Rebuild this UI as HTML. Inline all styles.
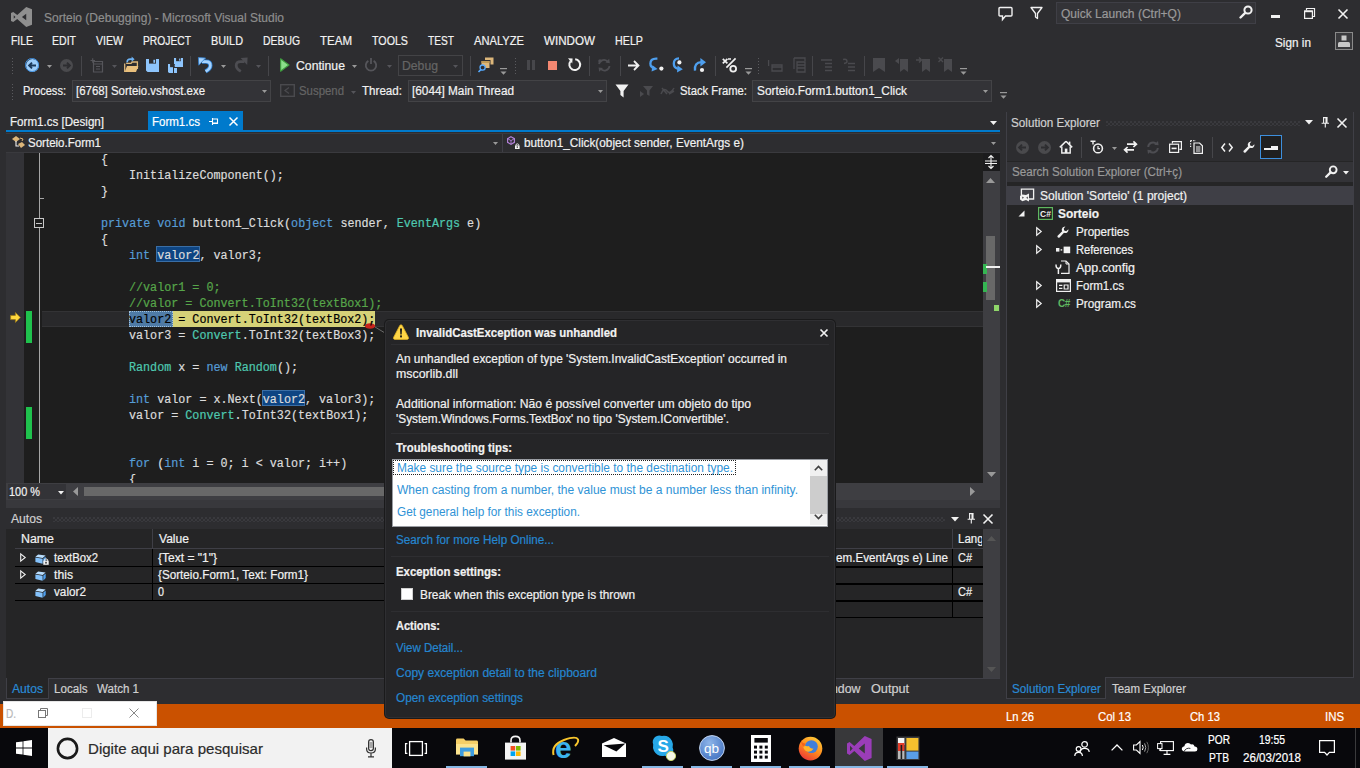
<!DOCTYPE html>
<html><head><meta charset="utf-8"><title>Sorteio (Debugging) - Microsoft Visual Studio</title>
<style>
*{box-sizing:border-box;margin:0;padding:0}
html,body{width:1360px;height:768px;overflow:hidden;background:#2d2d30;font-family:"Liberation Sans",sans-serif;font-size:12px;color:#f1f1f1}
.a{position:absolute;white-space:nowrap}
.t{position:absolute;white-space:pre;line-height:16px;height:16px;-webkit-text-stroke:0.2px currentColor}
.m{font-family:"Liberation Mono",monospace}
svg{position:absolute;overflow:visible}
.k{color:#569cd6}.c{color:#57a64a}.ty{color:#4ec9b0}
</style></head><body>
<svg style="left:11px;top:7px;" width="21" height="20" viewBox="0 0 21.5 22" preserveAspectRatio="none"><path d="M15.6 0 L21.5 2.6 V19.4 L15.6 22 L6.4 13.2 L2.3 16.6 L0 15.5 V6.5 L2.3 5.4 L6.4 8.8 Z M15.6 7.4 L11.2 11 L15.6 14.6 Z M2.8 9.2 V12.8 L4.6 11 Z" fill="#8f8f8f" fill-rule="evenodd"/></svg>
<div class="t" style="left:44px;top:10px;color:#8e8e8e;font-size:12.5px;transform:scaleX(0.9604);transform-origin:0 0;">Sorteio (Debugging) - Microsoft Visual Studio</div>
<svg style="left:998px;top:6px;" width="15" height="15" viewBox="0 0 15 15" preserveAspectRatio="none"><path d="M2 1.5 H13 Q14 1.5 14 2.5 V9 Q14 10 13 10 H7.5 L4.5 13.5 V10 H2 Q1 10 1 9 V2.5 Q1 1.5 2 1.5 Z" fill="none" stroke="#f1f1f1" stroke-width="1.4"/></svg>
<svg style="left:1030px;top:6px;" width="13" height="14" viewBox="0 0 13 14" preserveAspectRatio="none"><path d="M1 1.5 H12 L7.5 7.5 V12.5 L5.5 11 V7.5 Z" fill="none" stroke="#f1f1f1" stroke-width="1.3" stroke-linejoin="round"/></svg>
<div class="a" style="left:1056px;top:2px;width:200px;height:22px;background:#333337;border:1px solid #3f3f46"></div>
<div class="t" style="left:1061px;top:6px;color:#999999;font-size:12px;transform:scaleX(1.0023);transform-origin:0 0;">Quick Launch (Ctrl+Q)</div>
<svg style="left:1239px;top:5px;" width="14" height="14" viewBox="0 0 14 14" preserveAspectRatio="none"><circle cx="9" cy="5" r="3.6" fill="none" stroke="#f1f1f1" stroke-width="2"/><path d="M6.2 7.8 L1.5 12.5" stroke="#f1f1f1" stroke-width="2.4" stroke-linecap="round"/></svg>
<div class="a" style="left:1270.5px;top:15px;width:9.5px;height:3px;background:#f1f1f1;"></div>
<svg style="left:1304px;top:8px;" width="11" height="11" viewBox="0 0 11 11" preserveAspectRatio="none"><path d="M2.5 2.5 V0.5 H10.5 V8.5 H8.5" fill="none" stroke="#f1f1f1" stroke-width="1.2"/><rect x="0.6" y="3" width="7.8" height="7.4" fill="none" stroke="#f1f1f1" stroke-width="1.2"/><rect x="0.6" y="2.6" width="7.8" height="1.6" fill="#f1f1f1"/></svg>
<svg style="left:1338px;top:9px;" width="10" height="10" viewBox="0 0 10 10" preserveAspectRatio="none"><path d="M0.5 0.5 L9.5 9.5 M9.5 0.5 L0.5 9.5" stroke="#f1f1f1" stroke-width="1.6"/></svg>
<div class="t" style="left:1275px;top:34.5px;color:#f1f1f1;font-size:12px;transform:scaleX(0.9808);transform-origin:0 0;">Sign in</div>
<svg style="left:1334.5px;top:32.3px;" width="18" height="18" viewBox="0 0 18 18" preserveAspectRatio="none"><rect x="0.5" y="0.5" width="17" height="17" fill="#3a3a3d" stroke="#8a8a8a" stroke-width="1"/><rect x="6.5" y="3.5" width="5" height="5" fill="#c8c8c8"/><path d="M3 15 V11.5 Q3 10 4.5 10 H13.5 Q15 10 15 11.5 V15 Z" fill="#c8c8c8"/></svg>
<div class="t" style="left:11px;top:33px;color:#f1f1f1;font-size:12px;transform:scaleX(0.8681);transform-origin:0 0;">FILE</div>
<div class="t" style="left:52px;top:33px;color:#f1f1f1;font-size:12px;transform:scaleX(0.8777);transform-origin:0 0;">EDIT</div>
<div class="t" style="left:96px;top:33px;color:#f1f1f1;font-size:12px;transform:scaleX(0.8803);transform-origin:0 0;">VIEW</div>
<div class="t" style="left:143px;top:33px;color:#f1f1f1;font-size:12px;transform:scaleX(0.8569);transform-origin:0 0;">PROJECT</div>
<div class="t" style="left:211px;top:33px;color:#f1f1f1;font-size:12px;transform:scaleX(0.9054);transform-origin:0 0;">BUILD</div>
<div class="t" style="left:263px;top:33px;color:#f1f1f1;font-size:12px;transform:scaleX(0.8668);transform-origin:0 0;">DEBUG</div>
<div class="t" style="left:320px;top:33px;color:#f1f1f1;font-size:12px;transform:scaleX(0.9597);transform-origin:0 0;">TEAM</div>
<div class="t" style="left:372px;top:33px;color:#f1f1f1;font-size:12px;transform:scaleX(0.8896);transform-origin:0 0;">TOOLS</div>
<div class="t" style="left:428px;top:33px;color:#f1f1f1;font-size:12px;transform:scaleX(0.8477);transform-origin:0 0;">TEST</div>
<div class="t" style="left:474px;top:33px;color:#f1f1f1;font-size:12px;transform:scaleX(0.9294);transform-origin:0 0;">ANALYZE</div>
<div class="t" style="left:544px;top:33px;color:#f1f1f1;font-size:12px;transform:scaleX(0.9685);transform-origin:0 0;">WINDOW</div>
<div class="t" style="left:615px;top:33px;color:#f1f1f1;font-size:12px;transform:scaleX(0.8929);transform-origin:0 0;">HELP</div>
<div class="a" style="left:11px;top:57px;width:3px;height:18px;background-image:radial-gradient(circle,#5a5a5e 0.7px,transparent 0.9px);background-size:3px 3px"></div>
<svg style="left:25.5px;top:58.5px;" width="13" height="13" viewBox="0 0 13 13" preserveAspectRatio="none"><circle cx="6.5" cy="6.5" r="6.5" fill="#9ccdfb"/><path d="M3.2 6.5 H10 M6 3.6 L3.1 6.5 L6 9.4" fill="none" stroke="#1b3a5c" stroke-width="1.9"/></svg>
<div class="a" style="left:25.3px;top:58.3px;width:13.4px;height:13.4px;border-radius:50%;border:1.3px solid #3d8fe0"></div>
<svg style="left:46.5px;top:64.5px" width="5" height="3.0"><polygon points="0,0 5,0 2.5,3.0" fill="#999"/></svg>
<svg style="left:59.5px;top:58.5px;" width="13" height="13" viewBox="0 0 13 13" preserveAspectRatio="none"><circle cx="6.5" cy="6.5" r="6.5" fill="#4a4a4d"/><path d="M9.8 6.5 H3 M7 3.6 L9.9 6.5 L7 9.4" fill="none" stroke="#2d2d30" stroke-width="1.9"/></svg>
<div class="a" style="left:81px;top:56px;width:1px;height:20px;background:#46464a;"></div>
<svg style="left:90px;top:58px;" width="14" height="15" viewBox="0 0 14 15" preserveAspectRatio="none"><path d="M3.5 3.5 H12.5 V14 H3.5 Z M3.5 6 H12.5" fill="none" stroke="#55555a" stroke-width="1.2"/><path d="M0.5 2.5 H5 M2.7 0.3 V4.7 M6 8.5 H10 M6 11 H10" stroke="#55555a" stroke-width="1.1"/></svg>
<svg style="left:111.5px;top:64.5px" width="5" height="3.0"><polygon points="0,0 5,0 2.5,3.0" fill="#55555a"/></svg>
<svg style="left:124px;top:57px;" width="15" height="16" viewBox="0 0 15 16" preserveAspectRatio="none"><path d="M2.2 6.4 H7 L8.2 5 H13.4 V12" fill="none" stroke="#dcb67a" stroke-width="1.3"/><path d="M0.6 15 L3 9 H14.4 L12 15 Z" fill="#e8bf7c"/><path d="M0.7 15 V6.4" stroke="#dcb67a" stroke-width="1.3"/><path d="M3.2 5.4 Q3 2 6.6 2.2 H8.6" fill="none" stroke="#6db3f5" stroke-width="1.7"/><path d="M7.6 -0.4 L10.6 2.2 L7.6 4.8 Z" fill="#6db3f5"/></svg>
<svg style="left:146px;top:59px;" width="13" height="13" viewBox="0 0 13 13" preserveAspectRatio="none"><path d="M0 0 H13 V13 H1.6 L0 11.4 Z" fill="#8ec5fc"/><rect x="3" y="0" width="7" height="4.6" fill="#2d2d30"/><rect x="7.4" y="0.8" width="1.7" height="3" fill="#8ec5fc"/><rect x="3" y="8" width="7" height="5" fill="#2d2d30" opacity="0"/></svg>
<svg style="left:174px;top:58px;" width="9" height="9" viewBox="0 0 13 13" preserveAspectRatio="none"><path d="M0 0 H13 V13 H1.6 L0 11.4 Z" fill="#8ec5fc"/><rect x="3" y="0" width="7" height="4.6" fill="#2d2d30"/><rect x="7.4" y="0.8" width="1.7" height="3" fill="#8ec5fc"/><rect x="3" y="8" width="7" height="5" fill="#2d2d30" opacity="0"/></svg>
<svg style="left:168px;top:64px;" width="9" height="9" viewBox="0 0 13 13" preserveAspectRatio="none"><path d="M0 0 H13 V13 H1.6 L0 11.4 Z" fill="#8ec5fc"/><rect x="3" y="0" width="7" height="4.6" fill="#2d2d30"/><rect x="7.4" y="0.8" width="1.7" height="3" fill="#8ec5fc"/><rect x="3" y="8" width="7" height="5" fill="#2d2d30" opacity="0"/></svg>
<div class="a" style="left:173.2px;top:63.2px;width:1px;height:9.8px;background:#2d2d30;"></div>
<div class="a" style="left:173.2px;top:67.2px;width:9.8px;height:1px;background:#2d2d30;"></div>
<div class="a" style="left:190px;top:56px;width:1px;height:20px;background:#46464a;"></div>
<svg style="left:198px;top:56.5px;" width="15" height="16" viewBox="0 0 15 16" preserveAspectRatio="none"><path d="M4 4.6 H8 Q12.4 4.6 12.4 8.4 Q12.4 11.6 7.6 14.4" fill="none" stroke="#2f7fd0" stroke-width="4.2"/><path d="M4 4.6 H8 Q12.4 4.6 12.4 8.4 Q12.4 11.6 7.6 14.4" fill="none" stroke="#a5d2fd" stroke-width="2.6"/><path d="M0.4 0.6 L7.6 1 L0.8 8.2 Z" fill="#a5d2fd" stroke="#2f7fd0" stroke-width="0.8"/></svg>
<svg style="left:220.5px;top:64.5px" width="5" height="3.0"><polygon points="0,0 5,0 2.5,3.0" fill="#999"/></svg>
<svg style="left:234px;top:57px;" width="14" height="16" viewBox="0 0 14 16" preserveAspectRatio="none"><path d="M10.4 4.6 H6.5 Q2.2 4.6 2.2 8.4 Q2.2 11.6 6.8 14.4" fill="none" stroke="#4d4d52" stroke-width="2.8"/><path d="M13.6 0.6 L6.6 1 L13.2 8 Z" fill="#4d4d52"/></svg>
<svg style="left:255.5px;top:64.5px" width="5" height="3.0"><polygon points="0,0 5,0 2.5,3.0" fill="#55555a"/></svg>
<div class="a" style="left:268px;top:56px;width:1px;height:20px;background:#46464a;"></div>
<svg style="left:279.5px;top:57.5px;" width="9.5" height="14" viewBox="0 0 9.5 14" preserveAspectRatio="none"><path d="M0.6 0.8 L9 7 L0.6 13.2 Z" fill="#8be08b" stroke="#3f9b3f" stroke-width="1.2" stroke-linejoin="round"/></svg>
<div class="t" style="left:296px;top:57.5px;color:#f1f1f1;font-size:12px;transform:scaleX(1.0198);transform-origin:0 0;">Continue</div>
<svg style="left:351.5px;top:64.5px" width="5" height="3.0"><polygon points="0,0 5,0 2.5,3.0" fill="#999"/></svg>
<svg style="left:364px;top:58px;" width="14" height="14" viewBox="0 0 14 14" preserveAspectRatio="none"><path d="M9.6 2.9 A5.2 5.2 0 1 1 4.4 2.9" fill="none" stroke="#55555a" stroke-width="1.8"/><path d="M7 0 V6" stroke="#55555a" stroke-width="1.8"/></svg>
<svg style="left:386.5px;top:64.5px" width="5" height="3.0"><polygon points="0,0 5,0 2.5,3.0" fill="#55555a"/></svg>
<div class="a" style="left:398px;top:54.5px;width:65px;height:21px;background:#2d2d30;border:1px solid #434346"></div>
<div class="t" style="left:402px;top:57.5px;color:#656565;font-size:12px;transform:scaleX(1.0177);transform-origin:0 0;">Debug</div>
<svg style="left:452.5px;top:64.5px" width="5" height="3.0"><polygon points="0,0 5,0 2.5,3.0" fill="#55555a"/></svg>
<div class="a" style="left:470px;top:56px;width:1px;height:20px;background:#46464a;"></div>
<svg style="left:478px;top:57px;" width="16" height="16" viewBox="0 0 16 16" preserveAspectRatio="none"><rect x="7" y="0.5" width="8.5" height="7" fill="#dcb67a"/><rect x="3" y="3.5" width="9" height="8" fill="#dcb67a" stroke="#2d2d30" stroke-width="1"/><rect x="3.5" y="4" width="8" height="2" fill="#c09a55"/><circle cx="4.6" cy="10.6" r="2.6" fill="#2d2d30" stroke="#55aaff" stroke-width="1.3"/><path d="M2.8 12.6 L0.5 15" stroke="#55aaff" stroke-width="1.6"/></svg>
<svg style="left:500px;top:68px;" width="7" height="8" viewBox="0 0 7 8" preserveAspectRatio="none"><rect x="0" y="0" width="7" height="1.2" fill="#999"/><polygon points="0.5,3.4 6.5,3.4 3.5,6.8" fill="#999"/></svg>
<div class="a" style="left:514px;top:57px;width:3px;height:18px;background-image:radial-gradient(circle,#5a5a5e 0.7px,transparent 0.9px);background-size:3px 3px"></div>
<div class="a" style="left:526.5px;top:60px;width:3px;height:10px;background:#47474b;"></div>
<div class="a" style="left:531.5px;top:60px;width:3px;height:10px;background:#47474b;"></div>
<div class="a" style="left:548px;top:60.5px;width:9px;height:9px;background:#f48771;"></div>
<svg style="left:567px;top:57px;" width="15" height="15" viewBox="0 0 15 15" preserveAspectRatio="none"><path d="M3.6 4.2 A5.4 5.4 0 1 0 8.2 2.3" fill="none" stroke="#f1f1f1" stroke-width="2"/><path d="M1 1.2 L5.6 1.6 L5.2 6.4 Z" fill="#f1f1f1"/></svg>
<div class="a" style="left:589px;top:56px;width:1px;height:20px;background:#46464a;"></div>
<svg style="left:597px;top:58px;" width="15" height="14" viewBox="0 0 15 14" preserveAspectRatio="none"><path d="M2 6 A5 5 0 0 1 11 4 M12.5 8 A5 5 0 0 1 3.5 10.5" fill="none" stroke="#4d4d52" stroke-width="1.8"/><path d="M8.4 4.6 L12.8 5.2 L12.2 0.8 Z M6 10 L1.6 9.4 L2.2 13.8 Z" fill="#4d4d52"/><circle cx="3" cy="3" r="1.8" fill="#4d4d52"/></svg>
<div class="a" style="left:620px;top:56px;width:1px;height:20px;background:#46464a;"></div>
<svg style="left:628px;top:60px;" width="12" height="11" viewBox="0 0 12 11" preserveAspectRatio="none"><path d="M0 5.5 H10 M6 1 L10.5 5.5 L6 10" fill="none" stroke="#f1f1f1" stroke-width="1.8"/></svg>
<svg style="left:648px;top:57px;" width="16" height="16" viewBox="0 0 16 16" preserveAspectRatio="none"><path d="M9.4 1.6 H8 Q2.4 1.6 2.4 6.6 Q2.4 10.4 6 11" fill="none" stroke="#4e9fee" stroke-width="2.3"/><path d="M4.4 8.2 L9.6 12 L3.6 14.4 Z" fill="#4e9fee"/><circle cx="13.4" cy="11.6" r="2.1" fill="#f1f1f1"/></svg>
<svg style="left:672px;top:57px;" width="13" height="17" viewBox="0 0 13 17" preserveAspectRatio="none"><path d="M7 1.4 Q1.8 1.4 1.8 6.6 Q1.8 11 6 11.8" fill="none" stroke="#4e9fee" stroke-width="2.3"/><path d="M5.6 8.4 L10.8 12.2 L5 15.4 Z" fill="#4e9fee"/><circle cx="7.4" cy="5.4" r="2.1" fill="#f1f1f1"/></svg>
<svg style="left:693px;top:57px;" width="14" height="16" viewBox="0 0 14 16" preserveAspectRatio="none"><path d="M2 13.6 Q1 5.6 8.4 5.2" fill="none" stroke="#4e9fee" stroke-width="2.3"/><path d="M7.4 1 L13 5.2 L7.4 9.4 Z" fill="#4e9fee"/><circle cx="9" cy="13" r="2.1" fill="#f1f1f1"/></svg>
<div class="a" style="left:715px;top:56px;width:1px;height:20px;background:#46464a;"></div>
<svg style="left:722px;top:57px;" width="16" height="16" viewBox="0 0 16 16" preserveAspectRatio="none"><path d="M0.8 1.8 L5.4 6.4 M0.8 6.4 L5.4 1.8 M6 2 H9 M13.6 1.4 L4.4 10.6" fill="none" stroke="#f1f1f1" stroke-width="1.7"/><circle cx="11.2" cy="11.8" r="2.9" fill="none" stroke="#f1f1f1" stroke-width="1.8"/></svg>
<svg style="left:745px;top:68px;" width="7" height="8" viewBox="0 0 7 8" preserveAspectRatio="none"><rect x="0" y="0" width="7" height="1.2" fill="#999"/><polygon points="0.5,3.4 6.5,3.4 3.5,6.8" fill="#999"/></svg>
<div class="a" style="left:757px;top:57px;width:3px;height:18px;background-image:radial-gradient(circle,#5a5a5e 0.7px,transparent 0.9px);background-size:3px 3px"></div>
<svg style="left:768px;top:58px;" width="15" height="14" viewBox="0 0 15 14" preserveAspectRatio="none"><path d="M0.6 2 V8 M4 7 H14 V13 H4 Z M4 9 H14" fill="none" stroke="#4a4a4e" stroke-width="1.3"/></svg>
<svg style="left:790px;top:57px;" width="16" height="16" viewBox="0 0 16 16" preserveAspectRatio="none"><path d="M4 1 H15 V4 M4 1 V12 M7 5 H15 V15 H7 Z M7 8 H15 M7 11 H15" fill="none" stroke="#4a4a4e" stroke-width="1.3"/></svg>
<div class="a" style="left:812px;top:56px;width:1px;height:20px;background:#46464a;"></div>
<svg style="left:820px;top:59px;" width="13" height="12" viewBox="0 0 13 12" preserveAspectRatio="none"><path d="M1 1 H12 M5 4.5 H12 M5 8 H12 M5 11.5 H12" stroke="#4a4a4e" stroke-width="1.4"/></svg>
<svg style="left:842px;top:58px;" width="14" height="13" viewBox="0 0 14 13" preserveAspectRatio="none"><path d="M1 1.5 Q5 0.5 5 3.5 Q5 5 2 5.5 M6 5.5 H13 M6 9 H13 M6 12.5 H13" fill="none" stroke="#4a4a4e" stroke-width="1.4"/></svg>
<div class="a" style="left:864px;top:56px;width:1px;height:20px;background:#46464a;"></div>
<svg style="left:873px;top:58px;" width="12" height="14" viewBox="0 0 12 14" preserveAspectRatio="none"><path d="M0 0 H12 V14 L6 10 L0 14 Z" fill="#4a4a4e"/></svg>
<svg style="left:895px;top:57px;" width="14" height="15" viewBox="0 0 14 15" preserveAspectRatio="none"><path d="M5 2 H13 V15 L9 12 L5 15 Z" fill="#4a4a4e"/><path d="M0 4 L4 1 V7 Z" fill="#4a4a4e"/></svg>
<svg style="left:916px;top:57px;" width="15" height="15" viewBox="0 0 15 15" preserveAspectRatio="none"><path d="M6 2 H14 V15 L10 12 L6 15 Z" fill="#4a4a4e"/><path d="M0 3 H5 M3 0.5 L5.5 3 L3 5.5" stroke="#4a4a4e" stroke-width="1.4" fill="none"/></svg>
<svg style="left:938px;top:57px;" width="15" height="15" viewBox="0 0 15 15" preserveAspectRatio="none"><path d="M6 2 H14 V15 L10 12 L6 15 Z" fill="#4a4a4e"/><path d="M0.5 0.5 L5 5 M5 0.5 L0.5 5" stroke="#4a4a4e" stroke-width="1.4"/></svg>
<svg style="left:960px;top:68px;" width="7" height="8" viewBox="0 0 7 8" preserveAspectRatio="none"><rect x="0" y="0" width="7" height="1.2" fill="#999"/><polygon points="0.5,3.4 6.5,3.4 3.5,6.8" fill="#999"/></svg>
<div class="a" style="left:11px;top:83px;width:3px;height:18px;background-image:radial-gradient(circle,#5a5a5e 0.7px,transparent 0.9px);background-size:3px 3px"></div>
<div class="t" style="left:23px;top:83.3px;color:#f1f1f1;font-size:12px;transform:scaleX(0.9210);transform-origin:0 0;">Process:</div>
<div class="a" style="left:72px;top:80px;width:199px;height:22px;background:#333337;border:1px solid #434346"></div>
<div class="t" style="left:76px;top:83.3px;color:#f1f1f1;font-size:12px;transform:scaleX(0.9526);transform-origin:0 0;">[6768] Sorteio.vshost.exe</div>
<svg style="left:261.5px;top:90.0px" width="5" height="3.0"><polygon points="0,0 5,0 2.5,3.0" fill="#999"/></svg>
<svg style="left:280px;top:84px;" width="15" height="13" viewBox="0 0 15 13" preserveAspectRatio="none"><rect x="0.7" y="0.7" width="13.6" height="11.6" fill="none" stroke="#4a4a4e" stroke-width="1.4"/><path d="M9 3.5 L5 6.5 L9 9.5" fill="none" stroke="#4a4a4e" stroke-width="1.3"/></svg>
<div class="t" style="left:299px;top:83.3px;color:#656565;font-size:12px;transform:scaleX(0.9499);transform-origin:0 0;">Suspend</div>
<svg style="left:350.5px;top:90.5px" width="5" height="3.0"><polygon points="0,0 5,0 2.5,3.0" fill="#55555a"/></svg>
<div class="t" style="left:362px;top:83.3px;color:#f1f1f1;font-size:12px;transform:scaleX(0.9671);transform-origin:0 0;">Thread:</div>
<div class="a" style="left:408px;top:80px;width:199px;height:22px;background:#333337;border:1px solid #434346"></div>
<div class="t" style="left:412px;top:83.3px;color:#f1f1f1;font-size:12px;transform:scaleX(0.9821);transform-origin:0 0;">[6044] Main Thread</div>
<svg style="left:597.5px;top:90.0px" width="5" height="3.0"><polygon points="0,0 5,0 2.5,3.0" fill="#999"/></svg>
<svg style="left:615px;top:84px;" width="14" height="14" viewBox="0 0 14 14" preserveAspectRatio="none"><path d="M0.5 0.5 H13.5 L8.6 7 V13.5 L5.4 11 V7 Z" fill="#f1f1f1"/></svg>
<svg style="left:640px;top:85px;" width="14" height="13" viewBox="0 0 14 13" preserveAspectRatio="none"><path d="M3 1 H13 L9.5 5.5 V11 L7 9.5 V5.5 Z" fill="#4a4a4e"/><path d="M0 6 L4 9 L0 12" fill="#4a4a4e"/></svg>
<svg style="left:661px;top:86px;" width="14" height="10" viewBox="0 0 14 10" preserveAspectRatio="none"><path d="M0 8 Q3 1 6 5 T13 2 M1 2 L6 8 M8 8 L13 5" fill="none" stroke="#4a4a4e" stroke-width="1.5"/></svg>
<div class="t" style="left:680px;top:83.3px;color:#f1f1f1;font-size:12px;transform:scaleX(0.9389);transform-origin:0 0;">Stack Frame:</div>
<div class="a" style="left:752px;top:80px;width:240px;height:22px;background:#333337;border:1px solid #434346"></div>
<div class="t" style="left:757px;top:83.3px;color:#f1f1f1;font-size:12px;transform:scaleX(0.9863);transform-origin:0 0;">Sorteio.Form1.button1_Click</div>
<svg style="left:982.5px;top:90.0px" width="5" height="3.0"><polygon points="0,0 5,0 2.5,3.0" fill="#999"/></svg>
<svg style="left:1000px;top:92px;" width="7" height="8" viewBox="0 0 7 8" preserveAspectRatio="none"><rect x="0" y="0" width="7" height="1.2" fill="#999"/><polygon points="0.5,3.4 6.5,3.4 3.5,6.8" fill="#999"/></svg>
<div class="t" style="left:10px;top:114.3px;color:#f1f1f1;font-size:12px;transform:scaleX(0.9655);transform-origin:0 0;">Form1.cs [Design]</div>
<div class="a" style="left:148px;top:111px;width:95px;height:20px;background:#007acc;"></div>
<div class="t" style="left:152px;top:114.3px;color:#ffffff;font-size:12px;transform:scaleX(0.9597);transform-origin:0 0;">Form1.cs</div>
<svg style="left:209px;top:117px;" width="10" height="9" viewBox="0 0 10 9" preserveAspectRatio="none"><path d="M0 4.5 H3.5 M3.5 1 V8 M3.5 2 H8.5 V6.5 H3.5 M3.5 6 H8.5" fill="none" stroke="#fff" stroke-width="1.1"/></svg>
<svg style="left:229px;top:117px;" width="9" height="9" viewBox="0 0 9 9" preserveAspectRatio="none"><path d="M0.5 0.5 L8.5 8.5 M8.5 0.5 L0.5 8.5" stroke="#fff" stroke-width="1.5"/></svg>
<div class="a" style="left:6px;top:130px;width:994px;height:2px;background:#007acc;"></div>
<svg style="left:990.0px;top:120.5px" width="7" height="4.0"><polygon points="0,0 7,0 3.5,4.0" fill="#f1f1f1"/></svg>
<div class="a" style="left:6px;top:133px;width:994px;height:20px;background:#2d2d30;border-top:1px solid #3a3a3e;border-bottom:1px solid #3a3a3e"></div>
<svg style="left:11px;top:135px;" width="15" height="15" viewBox="0 0 15 15" preserveAspectRatio="none"><path d="M1 4 L5 1 L9 4 L5 7 Z" fill="#dcb67a"/><path d="M7 9 L11 7 L14 10 L10 13 Z" fill="#dcb67a"/><path d="M5 6 V11 H8" fill="none" stroke="#f1f1f1" stroke-width="1.1"/><path d="M9 3 L12 4 L11 6" fill="none" stroke="#dcb67a" stroke-width="1"/></svg>
<div class="t" style="left:28px;top:135px;color:#f1f1f1;font-size:12px;transform:scaleX(0.9601);transform-origin:0 0;">Sorteio.Form1</div>
<svg style="left:492.5px;top:142.0px" width="5" height="3.0"><polygon points="0,0 5,0 2.5,3.0" fill="#999"/></svg>
<div class="a" style="left:502px;top:134px;width:1px;height:18px;background:#3f3f46;"></div>
<svg style="left:507px;top:136px;" width="13" height="14" viewBox="0 0 13 14" preserveAspectRatio="none"><path d="M4 0.8 L7.4 2.6 V6.4 L4 8.2 L0.6 6.4 V2.6 Z" fill="none" stroke="#b180d7" stroke-width="1.2"/><path d="M4 8.2 V4.6 L0.8 2.8 M4 4.6 L7.2 2.8" fill="none" stroke="#b180d7" stroke-width="0.9"/><rect x="8" y="9.4" width="4.6" height="3.6" fill="#f1f1f1"/><path d="M9 9.4 V8.4 Q10.3 7.2 11.6 8.4 V9.4" fill="none" stroke="#f1f1f1" stroke-width="0.9"/><rect x="9.7" y="10.4" width="1.2" height="1.4" fill="#2d2d30"/></svg>
<div class="t" style="left:524px;top:135px;color:#f1f1f1;font-size:12px;transform:scaleX(0.9816);transform-origin:0 0;">button1_Click(object sender, EventArgs e)</div>
<svg style="left:990.5px;top:142.0px" width="5" height="3.0"><polygon points="0,0 5,0 2.5,3.0" fill="#999"/></svg>
<div class="a" style="left:6px;top:153px;width:977px;height:330px;background:#1e1e1e;"></div>
<div class="a" style="left:6px;top:153px;width:18px;height:330px;background:#333337;"></div>
<div class="a" style="left:39px;top:153px;width:1px;height:330px;background:#a5a5a5;"></div>
<div class="a" style="left:39px;top:198px;width:5px;height:1px;background:#a5a5a5;"></div>
<div class="a" style="left:34px;top:218px;width:10px;height:10px;background:#1e1e1e;border:1px solid #c8c8c8"></div>
<div class="a" style="left:36px;top:222.5px;width:6px;height:1px;background:#c8c8c8;"></div>
<div class="a" style="left:42px;top:311px;width:941px;height:16px;background:#29292b;border-top:1px solid #333335;border-bottom:1px solid #333335"></div>
<div class="a" style="left:26px;top:311px;width:6px;height:32px;background:#1fc24d;"></div>
<div class="a" style="left:26px;top:407px;width:6px;height:32px;background:#1fc24d;"></div>
<svg style="left:10px;top:312px;" width="11" height="11" viewBox="0 0 11 11" preserveAspectRatio="none"><path d="M0.6 3.4 H5.4 V0.6 L10.4 5.5 L5.4 10.4 V7.6 H0.6 Z" fill="#ffd83d" stroke="#9c7a1a" stroke-width="0.8"/></svg>
<div class="a" style="left:156px;top:246.3px;width:44px;height:16.2px;background:#0e4583;border:1px solid #3a6ea5"></div>
<div class="a" style="left:261.5px;top:390.3px;width:43.5px;height:16.2px;background:#0e4583;border:1px solid #3a6ea5"></div>
<div class="a" style="left:128.5px;top:311.3px;width:246px;height:15.3px;background:#d6d278;"></div>
<div class="a" style="left:128.5px;top:311.3px;width:44px;height:15.3px;background:#4f7ba6;border:1px dotted #9fc0dd"></div>
<svg style="left:362px;top:322px;" width="30" height="14" viewBox="0 0 30 14" preserveAspectRatio="none"><ellipse cx="8" cy="4" rx="5.2" ry="2.8" fill="#c8231c"/><path d="M13 5 L23 11" stroke="#6a6a6a" stroke-width="1"/></svg>
<div class="t m" style="left:100.8px;top:151.8px;color:#dcdcdc;font-size:12px;transform:scaleX(0.9718);transform-origin:0 0;">{</div>
<div class="t m" style="left:129.0px;top:167.8px;color:#dcdcdc;font-size:12px;transform:scaleX(0.9777);transform-origin:0 0;">InitializeComponent();</div>
<div class="t m" style="left:100.8px;top:183.8px;color:#dcdcdc;font-size:12px;transform:scaleX(0.9718);transform-origin:0 0;">}</div>
<div class="t m" style="left:100.8px;top:215.8px;color:#dcdcdc;font-size:12px;transform:scaleX(0.9776);transform-origin:0 0;"><span style="color:#569cd6">private</span> <span style="color:#569cd6">void</span> button1_Click(<span style="color:#569cd6">object</span> sender, <span style="color:#4ec9b0">EventArgs</span> e)</div>
<div class="t m" style="left:100.8px;top:231.8px;color:#dcdcdc;font-size:12px;transform:scaleX(0.9718);transform-origin:0 0;">{</div>
<div class="t m" style="left:129.0px;top:247.8px;color:#dcdcdc;font-size:12px;transform:scaleX(0.9779);transform-origin:0 0;"><span style="color:#569cd6">int</span> valor2, valor3;</div>
<div class="t m" style="left:129.0px;top:279.8px;color:#dcdcdc;font-size:12px;transform:scaleX(0.9773);transform-origin:0 0;"><span style="color:#57a64a">//valor1 = 0;</span></div>
<div class="t m" style="left:129.0px;top:295.8px;color:#dcdcdc;font-size:12px;transform:scaleX(0.9774);transform-origin:0 0;"><span style="color:#57a64a">//valor = Convert.ToInt32(textBox1);</span></div>
<div class="t m" style="left:129.0px;top:311.8px;color:#dcdcdc;font-size:12px;transform:scaleX(0.9776);transform-origin:0 0;"><span style="color:#000000">valor2 = Convert.ToInt32(textBox2);</span></div>
<div class="t m" style="left:129.0px;top:327.8px;color:#dcdcdc;font-size:12px;transform:scaleX(0.9775);transform-origin:0 0;">valor3 = <span style="color:#4ec9b0">Convert</span>.ToInt32(textBox3);</div>
<div class="t m" style="left:129.0px;top:359.8px;color:#dcdcdc;font-size:12px;transform:scaleX(0.9776);transform-origin:0 0;"><span style="color:#4ec9b0">Random</span> x = <span style="color:#569cd6">new</span> <span style="color:#4ec9b0">Random</span>();</div>
<div class="t m" style="left:129.0px;top:391.8px;color:#dcdcdc;font-size:12px;transform:scaleX(0.9776);transform-origin:0 0;"><span style="color:#569cd6">int</span> valor = x.Next(valor2, valor3);</div>
<div class="t m" style="left:129.0px;top:407.8px;color:#dcdcdc;font-size:12px;transform:scaleX(0.9777);transform-origin:0 0;">valor = <span style="color:#4ec9b0">Convert</span>.ToInt32(textBox1);</div>
<div class="t m" style="left:129.0px;top:455.8px;color:#dcdcdc;font-size:12px;transform:scaleX(0.9773);transform-origin:0 0;"><span style="color:#569cd6">for</span> (<span style="color:#569cd6">int</span> i = 0; i &lt; valor; i++)</div>
<div class="t m" style="left:129.0px;top:471.8px;color:#dcdcdc;font-size:12px;transform:scaleX(0.9718);transform-origin:0 0;">{</div>
<div class="a" style="left:983px;top:153px;width:17px;height:330px;background:#3e3e42;"></div>
<div class="a" style="left:983px;top:153px;width:17px;height:17.5px;background:#1b1b1d;"></div>
<svg style="left:985px;top:155px;" width="12" height="14" viewBox="0 0 12 14" preserveAspectRatio="none"><path d="M0 6 H12 M0 8.5 H12" stroke="#f1f1f1" stroke-width="1.2"/><path d="M6 0.5 V13.5 M3.5 3 L6 0.5 L8.5 3 M3.5 11 L6 13.5 L8.5 11" stroke="#f1f1f1" stroke-width="1.1" fill="none"/></svg>
<svg style="left:986px;top:177.5px;" width="9" height="5" viewBox="0 0 9 5" preserveAspectRatio="none"><polygon points="0,5 9,5 4.5,0" fill="#999"/></svg>
<svg style="left:987px;top:472px;" width="9" height="5" viewBox="0 0 9 5" preserveAspectRatio="none"><polygon points="0,0 9,0 4.5,5" fill="#999"/></svg>
<div class="a" style="left:986px;top:236px;width:9px;height:64px;background:#686868;"></div>
<div class="a" style="left:982.5px;top:264px;width:4.7px;height:9.5px;background:#35b552;"></div>
<div class="a" style="left:982.5px;top:282px;width:4.7px;height:10px;background:#35b552;"></div>
<div class="a" style="left:986px;top:265.8px;width:14px;height:1.8px;background:#f1f1f1;"></div>
<div class="a" style="left:994.3px;top:305px;width:5px;height:6.4px;background:#8fd66a;"></div>
<div class="a" style="left:6px;top:483px;width:994px;height:17px;background:#3e3e42;"></div>
<div class="a" style="left:6px;top:500px;width:994px;height:8px;background:#38383c;"></div>
<div class="a" style="left:8px;top:484px;width:58px;height:14.5px;background:#333337;"></div>
<div class="t" style="left:9px;top:484.3px;color:#f1f1f1;font-size:12px;transform:scaleX(0.9109);transform-origin:0 0;">100 %</div>
<svg style="left:58.0px;top:490.75px" width="6" height="3.5"><polygon points="0,0 6,0 3.0,3.5" fill="#f1f1f1"/></svg>
<svg style="left:73px;top:487px;" width="5" height="9" viewBox="0 0 5 9" preserveAspectRatio="none"><polygon points="5,0 5,9 0,4.5" fill="#999"/></svg>
<svg style="left:970px;top:487px;" width="5" height="9" viewBox="0 0 5 9" preserveAspectRatio="none"><polygon points="0,0 0,9 5,4.5" fill="#999"/></svg>
<div class="a" style="left:84px;top:487.2px;width:740px;height:8.6px;background:#686868;"></div>
<div class="a" style="left:983px;top:483px;width:17px;height:17px;background:#3e3e42;"></div>
<div class="a" style="left:6px;top:508px;width:994px;height:170px;background:#252526;"></div>
<div class="a" style="left:6px;top:508px;width:994px;height:21px;background:#2d2d30;"></div>
<div class="t" style="left:11px;top:511px;color:#d0d0d0;font-size:12px;transform:scaleX(1.0102);transform-origin:0 0;">Autos</div>
<div class="a" style="left:52px;top:516px;width:893px;height:6px;background-image:radial-gradient(circle,#434347 0.6px,transparent 0.85px);background-size:4px 4px;background-position:0 0"></div><div class="a" style="left:54px;top:518px;width:891px;height:4px;background-image:radial-gradient(circle,#434347 0.6px,transparent 0.85px);background-size:4px 4px"></div>
<svg style="left:951.0px;top:516.75px" width="8" height="4.5"><polygon points="0,0 8,0 4.0,4.5" fill="#f1f1f1"/></svg>
<svg style="left:967px;top:513px;" width="8" height="11" viewBox="0 0 8 11" preserveAspectRatio="none"><path d="M2 0.6 H6.6 M2.6 0.6 V6 M6 0.6 V6 M5 0.6 V6 M0.6 6.2 H8 M4.3 6.2 V10.6" fill="none" stroke="#f1f1f1" stroke-width="1.1"/></svg>
<svg style="left:983px;top:514px;" width="10" height="10" viewBox="0 0 10 10" preserveAspectRatio="none"><path d="M0.5 0.5 L9.5 9.5 M9.5 0.5 L0.5 9.5" stroke="#f1f1f1" stroke-width="1.6"/></svg>
<div class="a" style="left:15px;top:529px;width:968px;height:19px;background:#252526;"></div>
<div class="a" style="left:15px;top:548px;width:968px;height:1px;background:#3f3f46;"></div>
<div class="a" style="left:152px;top:529px;width:1px;height:71px;background:#3f3f46;"></div>
<div class="t" style="left:21px;top:531px;color:#f1f1f1;font-size:12px;transform:scaleX(1.0307);transform-origin:0 0;">Name</div>
<div class="t" style="left:159px;top:531px;color:#f1f1f1;font-size:12px;transform:scaleX(1.0063);transform-origin:0 0;">Value</div>
<div class="a" style="left:15px;top:566px;width:968px;height:1px;background:#000;"></div>
<div class="a" style="left:15px;top:583px;width:968px;height:1px;background:#000;"></div>
<div class="a" style="left:15px;top:600px;width:968px;height:1px;background:#000;"></div>
<div class="a" style="left:152px;top:549px;width:1px;height:51px;background:#000;"></div>
<svg style="left:20px;top:553px;" width="6" height="9" viewBox="0 0 6 9" preserveAspectRatio="none"><path d="M0.7 0.8 L5.2 4.5 L0.7 8.2 Z" fill="none" stroke="#f1f1f1" stroke-width="1.1"/></svg>
<svg style="left:35px;top:553.5px;" width="11" height="10" viewBox="0 0 11 10" preserveAspectRatio="none"><path d="M3.2 0.4 L10.6 1.4 L7.6 4 L0.4 2.8 Z" fill="#b9defe"/><path d="M0.4 3.4 L7.6 4.8 V9.8 L0.4 8 Z" fill="#84c2fb"/><path d="M8.3 4.6 L10.7 2.4 V7 L8.3 9.6 Z" fill="#4e9fee"/></svg>
<svg style="left:43px;top:558px;" width="6" height="7" viewBox="0 0 6 7" preserveAspectRatio="none"><rect x="0.3" y="2.6" width="5.4" height="4.2" fill="#f1f1f1"/><path d="M1.4 2.8 V1.6 Q3 0 4.6 1.6 V2.8" fill="none" stroke="#f1f1f1" stroke-width="1"/><rect x="2.3" y="3.8" width="1.4" height="1.8" fill="#252526"/></svg>
<div class="t" style="left:54px;top:550px;color:#f1f1f1;font-size:12px;transform:scaleX(0.9421);transform-origin:0 0;">textBox2</div>
<div class="t" style="left:158px;top:550px;color:#f1f1f1;font-size:12px;transform:scaleX(1.0016);transform-origin:0 0;">{Text = "1"}</div>
<svg style="left:20px;top:570px;" width="6" height="9" viewBox="0 0 6 9" preserveAspectRatio="none"><path d="M0.7 0.8 L5.2 4.5 L0.7 8.2 Z" fill="none" stroke="#f1f1f1" stroke-width="1.1"/></svg>
<svg style="left:35px;top:570.5px;" width="11" height="10" viewBox="0 0 11 10" preserveAspectRatio="none"><path d="M3.2 0.4 L10.6 1.4 L7.6 4 L0.4 2.8 Z" fill="#b9defe"/><path d="M0.4 3.4 L7.6 4.8 V9.8 L0.4 8 Z" fill="#84c2fb"/><path d="M8.3 4.6 L10.7 2.4 V7 L8.3 9.6 Z" fill="#4e9fee"/></svg>
<div class="t" style="left:54px;top:567px;color:#f1f1f1;font-size:12px;transform:scaleX(1.0167);transform-origin:0 0;">this</div>
<div class="t" style="left:158px;top:567px;color:#f1f1f1;font-size:12px;transform:scaleX(0.9750);transform-origin:0 0;">{Sorteio.Form1, Text: Form1}</div>
<svg style="left:35px;top:587.5px;" width="11" height="10" viewBox="0 0 11 10" preserveAspectRatio="none"><path d="M3.2 0.4 L10.6 1.4 L7.6 4 L0.4 2.8 Z" fill="#b9defe"/><path d="M0.4 3.4 L7.6 4.8 V9.8 L0.4 8 Z" fill="#84c2fb"/><path d="M8.3 4.6 L10.7 2.4 V7 L8.3 9.6 Z" fill="#4e9fee"/></svg>
<div class="t" style="left:54px;top:584px;color:#f1f1f1;font-size:12px;transform:scaleX(0.9790);transform-origin:0 0;">valor2</div>
<div class="t" style="left:158px;top:584px;color:#f1f1f1;font-size:12px;transform:scaleX(0.8972);transform-origin:0 0;">0</div>
<div class="a" style="left:952px;top:529px;width:1px;height:20px;background:#3f3f46;"></div>
<div class="t" style="left:958px;top:531px;color:#f1f1f1;font-size:12px;transform:scaleX(0.9600);transform-origin:0 0;width:25px;overflow:hidden;">Lang</div>
<div class="a" style="left:835px;top:567px;width:148px;height:1px;background:#000;"></div>
<div class="a" style="left:835px;top:584px;width:148px;height:1px;background:#000;"></div>
<div class="a" style="left:835px;top:601px;width:148px;height:1px;background:#000;"></div>
<div class="a" style="left:835px;top:617px;width:148px;height:1px;background:#000;"></div>
<div class="a" style="left:952px;top:549px;width:1px;height:68px;background:#000;"></div>
<div class="t" style="left:836px;top:550px;color:#f1f1f1;font-size:12px;transform:scaleX(0.9706);transform-origin:0 0;">em.EventArgs e) Line</div>
<div class="t" style="left:958px;top:550px;color:#f1f1f1;font-size:12px;transform:scaleX(0.9124);transform-origin:0 0;">C#</div>
<div class="t" style="left:958px;top:584px;color:#f1f1f1;font-size:12px;transform:scaleX(0.9124);transform-origin:0 0;">C#</div>
<div class="a" style="left:983px;top:529px;width:17px;height:149px;background:#3e3e42;"></div>
<svg style="left:987px;top:536px;" width="9" height="5" viewBox="0 0 9 5" preserveAspectRatio="none"><polygon points="0,5 9,5 4.5,0" fill="#555"/></svg>
<svg style="left:987px;top:667px;" width="9" height="5" viewBox="0 0 9 5" preserveAspectRatio="none"><polygon points="0,0 9,0 4.5,5" fill="#555"/></svg>
<div class="a" style="left:6px;top:678px;width:994px;height:22px;background:#2d2d30;"></div>
<div class="a" style="left:6px;top:678px;width:994px;height:1px;background:#3f3f46;"></div>
<div class="a" style="left:6px;top:678px;width:43px;height:21px;background:#252526;border:1px solid #3f3f46;border-top:none"></div>
<div class="t" style="left:12px;top:681px;color:#2a8ad4;font-size:12px;transform:scaleX(1.0102);transform-origin:0 0;">Autos</div>
<div class="t" style="left:54px;top:681px;color:#d0d0d0;font-size:12px;transform:scaleX(0.9658);transform-origin:0 0;">Locals</div>
<div class="t" style="left:97px;top:681px;color:#d0d0d0;font-size:12px;transform:scaleX(0.9638);transform-origin:0 0;">Watch 1</div>
<div class="t" style="left:831.3px;top:681px;color:#d0d0d0;font-size:12px;transform:scaleX(1.0283);transform-origin:0 0;">ndow</div>
<div class="t" style="left:871px;top:681px;color:#d0d0d0;font-size:12px;transform:scaleX(1.0546);transform-origin:0 0;">Output</div>
<div class="a" style="left:1006px;top:112px;width:348px;height:566px;background:#252526;"></div>
<div class="a" style="left:1006px;top:112px;width:348px;height:22px;background:#2d2d30;"></div>
<div class="a" style="left:1006px;top:112px;width:1px;height:566px;background:#3f3f46;"></div>
<div class="a" style="left:1353px;top:112px;width:1px;height:566px;background:#3f3f46;"></div>
<div class="a" style="left:1105px;top:677px;width:249px;height:1px;background:#3f3f46;"></div>
<div class="t" style="left:1011px;top:115px;color:#d0d0d0;font-size:12px;transform:scaleX(0.9738);transform-origin:0 0;">Solution Explorer</div>
<div class="a" style="left:1105px;top:120px;width:195px;height:6px;background-image:radial-gradient(circle,#434347 0.6px,transparent 0.85px);background-size:4px 4px;background-position:0 0"></div><div class="a" style="left:1107px;top:122px;width:193px;height:4px;background-image:radial-gradient(circle,#434347 0.6px,transparent 0.85px);background-size:4px 4px"></div>
<svg style="left:1305.0px;top:120.25px" width="8" height="4.5"><polygon points="0,0 8,0 4.0,4.5" fill="#f1f1f1"/></svg>
<svg style="left:1321px;top:117px;" width="8" height="11" viewBox="0 0 8 11" preserveAspectRatio="none"><path d="M2 0.6 H6.6 M2.6 0.6 V6 M6 0.6 V6 M5 0.6 V6 M0.6 6.2 H8 M4.3 6.2 V10.6" fill="none" stroke="#f1f1f1" stroke-width="1.1"/></svg>
<svg style="left:1337px;top:118px;" width="10" height="10" viewBox="0 0 10 10" preserveAspectRatio="none"><path d="M0.5 0.5 L9.5 9.5 M9.5 0.5 L0.5 9.5" stroke="#f1f1f1" stroke-width="1.6"/></svg>
<div class="a" style="left:1007px;top:134px;width:346px;height:27px;background:#2d2d30;"></div>
<svg style="left:1015.5px;top:140.5px;" width="13" height="13" viewBox="0 0 13 13" preserveAspectRatio="none"><circle cx="6.5" cy="6.5" r="6.5" fill="#4a4a4d"/><path d="M3.2 6.5 H10 M6 3.6 L3.1 6.5 L6 9.4" fill="none" stroke="#2d2d30" stroke-width="1.9"/></svg>
<svg style="left:1037.5px;top:140.5px;" width="13" height="13" viewBox="0 0 13 13" preserveAspectRatio="none"><circle cx="6.5" cy="6.5" r="6.5" fill="#4a4a4d"/><path d="M9.8 6.5 H3 M7 3.6 L9.9 6.5 L7 9.4" fill="none" stroke="#2d2d30" stroke-width="1.9"/></svg>
<svg style="left:1059px;top:140px;" width="14" height="14" viewBox="0 0 14 14" preserveAspectRatio="none"><path d="M7 1.2 L13.2 7.4 M7 1.2 L0.8 7.4" stroke="#f1f1f1" stroke-width="1.5" fill="none"/><path d="M2.8 6.6 V13 H11.2 V6.6" fill="none" stroke="#f1f1f1" stroke-width="1.4"/><rect x="5.8" y="8.6" width="2.6" height="4.4" fill="#f1f1f1"/><rect x="9.8" y="1.6" width="1.6" height="3" fill="#f1f1f1"/></svg>
<div class="a" style="left:1081px;top:137px;width:1px;height:21px;background:#46464a;"></div>
<svg style="left:1090px;top:140px;" width="14" height="14" viewBox="0 0 14 14" preserveAspectRatio="none"><circle cx="8" cy="8.4" r="4.4" fill="none" stroke="#f1f1f1" stroke-width="1.6"/><path d="M8 6 V8.6 H10" fill="none" stroke="#f1f1f1" stroke-width="1.2"/><path d="M0.5 1.2 H5.5 M3 1.2 V4.5" stroke="#f1f1f1" stroke-width="1.4"/></svg>
<svg style="left:1111.5px;top:146.5px" width="5" height="3.0"><polygon points="0,0 5,0 2.5,3.0" fill="#999"/></svg>
<svg style="left:1124px;top:141px;" width="13" height="12" viewBox="0 0 13 12" preserveAspectRatio="none"><path d="M3 3.2 H12.4 M9.4 0.4 L12.4 3.2 L9.4 6 M10 8.8 H0.6 M3.6 6 L0.6 8.8 L3.6 11.6" fill="none" stroke="#f1f1f1" stroke-width="1.7"/></svg>
<svg style="left:1147px;top:141px;" width="12" height="13" viewBox="0 0 12 13" preserveAspectRatio="none"><path d="M1.2 6 A4.8 4.8 0 0 1 9.5 3 M10.8 7 A4.8 4.8 0 0 1 2.5 10" fill="none" stroke="#4d4d52" stroke-width="1.9"/><path d="M7.2 3.8 L11.6 4.2 L11 0 Z M4.8 9.2 L0.4 8.8 L1 13 Z" fill="#4d4d52"/></svg>
<svg style="left:1169px;top:141px;" width="13" height="12" viewBox="0 0 13 12" preserveAspectRatio="none"><path d="M3.4 2.6 V0.6 H12.4 V8.4 H10.4" fill="none" stroke="#f1f1f1" stroke-width="1.2"/><rect x="0.6" y="3.2" width="9" height="8.2" fill="none" stroke="#f1f1f1" stroke-width="1.2"/><rect x="2.6" y="6.6" width="5" height="1.6" fill="#f1f1f1"/></svg>
<svg style="left:1190px;top:140px;" width="14" height="14" viewBox="0 0 14 14" preserveAspectRatio="none"><path d="M0.6 0.6 H6 M0.6 0.6 V7" fill="none" stroke="#f1f1f1" stroke-width="1.2" stroke-dasharray="1.3 1.3"/><path d="M4 3 H9.6 L12.4 5.8 V13.4 H4 Z" fill="none" stroke="#f1f1f1" stroke-width="1.2"/><path d="M6 7 H10.4 M6 9 H10.4 M6 11 H10.4" stroke="#f1f1f1" stroke-width="1"/></svg>
<div class="a" style="left:1212px;top:137px;width:1px;height:21px;background:#46464a;"></div>
<svg style="left:1221px;top:143px;" width="12" height="9" viewBox="0 0 12 9" preserveAspectRatio="none"><path d="M4 0.6 L0.8 4.5 L4 8.4 M8 0.6 L11.2 4.5 L8 8.4" fill="none" stroke="#f1f1f1" stroke-width="1.5"/></svg>
<svg style="left:1243px;top:141px;" width="12" height="12" viewBox="0 0 12 12" preserveAspectRatio="none"><path d="M8.4 0.4 Q5.4 0.2 4.8 3 Q4.6 4.2 5.2 5.2 L0.6 9.8 Q0 11 1 11.6 Q1.8 12 2.6 11.4 L7 6.8 Q8.8 7.4 10.2 6.4 Q11.8 5.2 11.4 3.2 L9.2 5.2 L7.2 4.6 L6.8 2.6 Z" fill="#f1f1f1"/></svg>
<div class="a" style="left:1260px;top:135px;width:22px;height:23.5px;background:#1f1f20;border:1px solid #3d8fdd"></div>
<div class="a" style="left:1264px;top:148.4px;width:8px;height:1.4px;background:#f1f1f1;"></div>
<div class="a" style="left:1271px;top:146px;width:7.4px;height:3.8px;background:#f1f1f1;"></div>
<div class="a" style="left:1007px;top:162px;width:346px;height:20px;background:#333337;"></div>
<div class="t" style="left:1012px;top:164px;color:#999999;font-size:12px;transform:scaleX(0.9674);transform-origin:0 0;">Search Solution Explorer (Ctrl+ç)</div>
<svg style="left:1325px;top:165px;" width="13" height="13" viewBox="0 0 13 13" preserveAspectRatio="none"><circle cx="8.2" cy="4.8" r="3.4" fill="none" stroke="#f1f1f1" stroke-width="1.9"/><path d="M5.6 7.4 L1.2 11.8" stroke="#f1f1f1" stroke-width="2.3" stroke-linecap="round"/></svg>
<svg style="left:1343.0px;top:170.75px" width="6" height="3.5"><polygon points="0,0 6,0 3.0,3.5" fill="#f1f1f1"/></svg>
<div class="a" style="left:1007px;top:186px;width:346px;height:19px;background:#3f3f46;"></div>
<svg style="left:1019px;top:188px;" width="16" height="15" viewBox="0 0 16 15" preserveAspectRatio="none"><path d="M2.4 11 V1.2 H14.6 V11 H9.4" fill="none" stroke="#f1f1f1" stroke-width="1.3"/><path d="M7 7 L10 5.6 V13.4 L7 12 L3.4 13.2 L1 11.6 V8 L3.4 6.6 Z M3.2 8.6 V10.8 L5 9.7 Z M7.2 9.7 L8.8 11 V8.4 Z" fill="#f1f1f1" fill-rule="evenodd"/></svg>
<div class="t" style="left:1040px;top:188px;color:#f1f1f1;font-size:12px;transform:scaleX(1.0023);transform-origin:0 0;">Solution 'Sorteio' (1 project)</div>
<svg style="left:1018px;top:210px;" width="7" height="7" viewBox="0 0 7 7" preserveAspectRatio="none"><polygon points="6.5,0.5 6.5,6.5 0.5,6.5" fill="#f1f1f1"/></svg>
<svg style="left:1038px;top:207px;" width="15" height="13" viewBox="0 0 15 13" preserveAspectRatio="none"><rect x="0.6" y="0.6" width="13.8" height="11.8" fill="#1e1e1e" stroke="#5fb760" stroke-width="1.2"/><text x="2" y="10" font-family="Liberation Sans, sans-serif" font-size="8.5" font-weight="bold" fill="#f1f1f1">C#</text></svg>
<div class="t" style="left:1058px;top:206px;color:#f1f1f1;font-size:12px;font-weight:bold;transform:scaleX(0.9917);transform-origin:0 0;">Sorteio</div>
<svg style="left:1036px;top:227px;" width="6" height="9" viewBox="0 0 6 9" preserveAspectRatio="none"><path d="M0.7 0.8 L5.2 4.5 L0.7 8.2 Z" fill="none" stroke="#f1f1f1" stroke-width="1.2"/></svg>
<svg style="left:1057px;top:226px;" width="12" height="12" viewBox="0 0 12 12" preserveAspectRatio="none"><path d="M8.4 0.4 Q5.4 0.2 4.8 3 Q4.6 4.2 5.2 5.2 L0.6 9.8 Q0 11 1 11.6 Q1.8 12 2.6 11.4 L7 6.8 Q8.8 7.4 10.2 6.4 Q11.8 5.2 11.4 3.2 L9.2 5.2 L7.2 4.6 L6.8 2.6 Z" fill="#f1f1f1"/></svg>
<div class="t" style="left:1076px;top:224px;color:#f1f1f1;font-size:12px;transform:scaleX(0.9689);transform-origin:0 0;">Properties</div>
<svg style="left:1036px;top:245px;" width="6" height="9" viewBox="0 0 6 9" preserveAspectRatio="none"><path d="M0.7 0.8 L5.2 4.5 L0.7 8.2 Z" fill="none" stroke="#f1f1f1" stroke-width="1.2"/></svg>
<svg style="left:1056px;top:246px;" width="15" height="8" viewBox="0 0 15 8" preserveAspectRatio="none"><rect x="0" y="2" width="3.4" height="3.6" fill="#f1f1f1"/><rect x="4.6" y="3.2" width="1.6" height="1.4" fill="#f1f1f1"/><rect x="7.6" y="0.6" width="6.6" height="6.6" fill="#f1f1f1"/></svg>
<div class="t" style="left:1076px;top:242px;color:#f1f1f1;font-size:12px;transform:scaleX(0.9287);transform-origin:0 0;">References</div>
<svg style="left:1055px;top:260px;" width="15" height="15" viewBox="0 0 15 15" preserveAspectRatio="none"><path d="M6 1 H11 L14 4 V13.4 H6" fill="none" stroke="#f1f1f1" stroke-width="1.2"/><path d="M11 1 V4 H14" fill="none" stroke="#f1f1f1" stroke-width="1"/><path d="M1 4.6 Q1 8.6 3.4 8.6 Q5.8 8.6 5.8 4.6 M3.4 8.6 V14" fill="none" stroke="#f1f1f1" stroke-width="1.5"/></svg>
<div class="t" style="left:1076px;top:260px;color:#f1f1f1;font-size:12px;transform:scaleX(1.0402);transform-origin:0 0;">App.config</div>
<svg style="left:1036px;top:281px;" width="6" height="9" viewBox="0 0 6 9" preserveAspectRatio="none"><path d="M0.7 0.8 L5.2 4.5 L0.7 8.2 Z" fill="none" stroke="#f1f1f1" stroke-width="1.2"/></svg>
<svg style="left:1056px;top:279px;" width="15" height="13" viewBox="0 0 15 13" preserveAspectRatio="none"><rect x="0.6" y="0.6" width="13.8" height="11.8" fill="none" stroke="#f1f1f1" stroke-width="1.2"/><rect x="0.6" y="0.6" width="13.8" height="2.8" fill="#f1f1f1"/><path d="M3 6.4 H6.4 M3 9.4 H6.4 M8.2 6 H12 V10 H8.2 Z" stroke="#f1f1f1" stroke-width="1.2" fill="none"/></svg>
<div class="t" style="left:1076px;top:278px;color:#f1f1f1;font-size:12px;transform:scaleX(0.9597);transform-origin:0 0;">Form1.cs</div>
<svg style="left:1036px;top:299px;" width="6" height="9" viewBox="0 0 6 9" preserveAspectRatio="none"><path d="M0.7 0.8 L5.2 4.5 L0.7 8.2 Z" fill="none" stroke="#f1f1f1" stroke-width="1.2"/></svg>
<div class="a" style="left:1058px;top:296px;line-height:16px;font-size:10px;font-weight:bold;color:#5fb760;letter-spacing:-0.5px">C#</div>
<div class="t" style="left:1076px;top:296px;color:#f1f1f1;font-size:12px;transform:scaleX(0.9778);transform-origin:0 0;">Program.cs</div>
<div class="a" style="left:1006px;top:678px;width:100px;height:21px;background:#252526;border:1px solid #3f3f46;border-top:none"></div>
<div class="t" style="left:1012px;top:681px;color:#2a8ad4;font-size:12px;transform:scaleX(0.9738);transform-origin:0 0;">Solution Explorer</div>
<div class="t" style="left:1112px;top:681px;color:#d0d0d0;font-size:12px;transform:scaleX(0.9564);transform-origin:0 0;">Team Explorer</div>
<div class="a" style="left:0px;top:704px;width:1360px;height:24px;background:#ca5100;"></div>
<div class="t" style="left:1006px;top:709px;color:#fff;font-size:12px;transform:scaleX(0.9324);transform-origin:0 0;">Ln 26</div>
<div class="t" style="left:1098px;top:709px;color:#fff;font-size:12px;transform:scaleX(0.9514);transform-origin:0 0;">Col 13</div>
<div class="t" style="left:1190px;top:709px;color:#fff;font-size:12px;transform:scaleX(0.9366);transform-origin:0 0;">Ch 13</div>
<div class="t" style="left:1325px;top:709px;color:#fff;font-size:12px;transform:scaleX(0.9493);transform-origin:0 0;">INS</div>
<div class="a" style="left:3px;top:701px;width:154px;height:25px;background:#ffffff;border:1px solid #e6e6e6"></div>
<div class="t" style="left:6px;top:706px;color:#b8b8b8;font-size:12px;transform:scaleX(0.8333);transform-origin:0 0;">D.</div>
<svg style="left:38px;top:708px;" width="10" height="10" viewBox="0 0 10 10" preserveAspectRatio="none"><path d="M2.5 2.5 V0.5 H9.5 V7.5 H7.5" fill="none" stroke="#777" stroke-width="1"/><rect x="0.5" y="2.5" width="7" height="7" fill="none" stroke="#777" stroke-width="1"/></svg>
<svg style="left:82px;top:708px;" width="10" height="10" viewBox="0 0 10 10" preserveAspectRatio="none"><rect x="0.5" y="0.5" width="9" height="9" fill="none" stroke="#ececec" stroke-width="1"/></svg>
<svg style="left:129px;top:708px;" width="10" height="10" viewBox="0 0 10 10" preserveAspectRatio="none"><path d="M0.5 0.5 L9.5 9.5 M9.5 0.5 L0.5 9.5" stroke="#888" stroke-width="1"/></svg>
<div class="a" style="left:0px;top:728px;width:1360px;height:40px;background:#08080c;"></div>
<svg style="left:16px;top:740px;" width="16" height="16" viewBox="0 0 16 16" preserveAspectRatio="none"><path d="M0 2.3 L6.6 1.4 V7.6 H0 Z M7.4 1.3 L16 0 V7.6 H7.4 Z M0 8.4 H6.6 V14.6 L0 13.7 Z M7.4 8.4 H16 V16 L7.4 14.7 Z" fill="#fff"/></svg>
<div class="a" style="left:48px;top:728px;width:344px;height:40px;background:#f2f2f2;"></div>
<svg style="left:56px;top:737px;" width="23" height="23" viewBox="0 0 23 23" preserveAspectRatio="none"><circle cx="11.5" cy="11.5" r="9.6" fill="none" stroke="#1a1a1a" stroke-width="2.6"/></svg>
<div class="t" style="left:88px;top:741px;color:#2b2b2b;font-size:15px;transform:scaleX(1.0041);transform-origin:0 0;line-height:20px;height:20px;margin-top:-2px;">Digite aqui para pesquisar</div>
<svg style="left:366px;top:739px;" width="10" height="19" viewBox="0 0 10 19" preserveAspectRatio="none"><rect x="2.6" y="0.6" width="4.8" height="11" rx="2.4" fill="none" stroke="#333" stroke-width="1.2"/><path d="M0.6 8.5 V10 Q0.6 14 5 14 Q9.4 14 9.4 10 V8.5 M5 14 V17.4 M2 17.8 H8" fill="none" stroke="#333" stroke-width="1.2"/><path d="M3.4 4 H6.6 M3.4 6 H6.6 M3.4 8 H6.6" stroke="#333" stroke-width="0.8"/></svg>
<svg style="left:405px;top:741px;" width="22" height="15" viewBox="0 0 22 15" preserveAspectRatio="none"><rect x="4.6" y="0.6" width="12.8" height="13.8" fill="none" stroke="#fff" stroke-width="1.3"/><path d="M2.4 2.6 H0.6 V12.4 H2.4 M19.6 2.6 H21.4 V12.4 H19.6" fill="none" stroke="#fff" stroke-width="1.3"/></svg>
<svg style="left:455px;top:737px;" width="24" height="22" viewBox="0 0 24 22" preserveAspectRatio="none"><path d="M1 3 Q1 1.6 2.4 1.6 H8.6 L10.6 3.6 H21.6 Q23 3.6 23 5 V16 H1 Z" fill="#f5cf67"/><path d="M1 7 H23 V17.6 H1 Z" fill="#fbe38e"/><rect x="5" y="10.6" width="14" height="8.6" fill="#3e9de0"/><rect x="8.6" y="14.6" width="6.8" height="4.8" fill="#fbe38e"/></svg>
<svg style="left:504px;top:735px;" width="23" height="26" viewBox="0 0 23 26" preserveAspectRatio="none"><path d="M1 7.6 H22 V24.6 H1 Z" fill="#f4f4f4"/><path d="M7 7.4 V5.4 Q7 1.4 11.5 1.4 Q16 1.4 16 5.4 V7.4" fill="none" stroke="#f4f4f4" stroke-width="1.6"/><rect x="6.6" y="11" width="4.6" height="4.6" fill="#f25022"/><rect x="12" y="11" width="4.6" height="4.6" fill="#7fba00"/><rect x="6.6" y="16.4" width="4.6" height="4.6" fill="#00a4ef"/><rect x="12" y="16.4" width="4.6" height="4.6" fill="#ffb900"/></svg>
<svg style="left:552px;top:735px;" width="28" height="26" viewBox="0 0 28 26" preserveAspectRatio="none"><text x="3" y="23" font-family="Liberation Sans, sans-serif" font-size="30" font-weight="bold" fill="#3cb4ee">e</text><path d="M1.6 20 Q-1 10 12 5 Q24 0.6 26 4.4 Q27 7 23 11" fill="none" stroke="#f7c52d" stroke-width="2"/></svg>
<svg style="left:602px;top:738px;" width="24" height="19" viewBox="0 0 24 19" preserveAspectRatio="none"><path d="M0 5.6 L12 0 L24 5.6 V19 H0 Z" fill="#fff"/><path d="M1.6 7.2 L23.4 5.4 L14.4 13.4 Z" fill="#08080c"/></svg>
<svg style="left:651px;top:734px;" width="25" height="27" viewBox="0 0 25 27" preserveAspectRatio="none"><path d="M4 3 Q7 0.4 11 2 Q18 1 21 7 Q22.6 10 21.6 13.4 Q23.4 17 20.6 20.4 Q17.6 23.4 13.6 21.8 Q6.4 23 3 17 Q1.4 14 2.2 10.4 Q0.6 6.4 4 3 Z" fill="#27a8e8"/><text x="6.4" y="18.4" font-family="Liberation Sans, sans-serif" font-size="17" font-weight="bold" fill="#fff">S</text><circle cx="20" cy="22" r="4.6" fill="#f6f7e6" stroke="#c5d36a" stroke-width="1"/></svg>
<svg style="left:699px;top:735px;" width="26" height="26" viewBox="0 0 26 26" preserveAspectRatio="none"><defs><radialGradient id="qb" cx="0.4" cy="0.3" r="0.8"><stop offset="0" stop-color="#8db4e8"/><stop offset="1" stop-color="#3f6fc0"/></radialGradient></defs><circle cx="13" cy="13" r="12.4" fill="url(#qb)" stroke="#c4d6f2" stroke-width="1"/><text x="5" y="17.6" font-family="Liberation Sans, sans-serif" font-size="13.5" fill="#fff">qb</text></svg>
<svg style="left:751px;top:735px;" width="20" height="27" viewBox="0 0 20 27" preserveAspectRatio="none"><rect x="0" y="0" width="20" height="27" fill="#fff"/><rect x="3.4" y="3" width="13.4" height="4.6" fill="#08080c"/><g fill="#08080c"><rect x="3" y="10.6" width="3" height="3"/><rect x="8.4" y="10.6" width="3" height="3"/><rect x="13.8" y="10.6" width="3" height="3"/><rect x="3" y="15.6" width="3" height="3"/><rect x="8.4" y="15.6" width="3" height="3"/><rect x="13.8" y="15.6" width="3" height="3"/><rect x="3" y="20.6" width="3" height="3"/><rect x="8.4" y="20.6" width="3" height="3"/><rect x="13.8" y="20.6" width="3" height="3"/></g></svg>
<svg style="left:798px;top:735px;" width="25" height="26" viewBox="0 0 25 26" preserveAspectRatio="none"><defs><linearGradient id="ff" x1="0.8" y1="0" x2="0.2" y2="1"><stop offset="0" stop-color="#ffcf3a"/><stop offset="0.5" stop-color="#ff8a1e"/><stop offset="1" stop-color="#e8303a"/></linearGradient></defs><circle cx="12.5" cy="13.6" r="11.8" fill="url(#ff)"/><circle cx="13.4" cy="11.6" r="6.4" fill="#3f7fdc"/><path d="M5 9 Q7 12 11 11 Q12 13.6 15.6 13.8 Q13 17.6 9 16.6 Q5 15 5 9 Z" fill="#ffb52a"/><path d="M3 5 Q4 8.6 7.6 8.6 L6 12 Q3 10 3 5 Z" fill="#f0641e"/></svg>
<div class="a" style="left:835px;top:728px;width:48px;height:40px;background:#38383a;"></div>
<svg style="left:847px;top:736px;" width="25" height="25" viewBox="0 0 25 25" preserveAspectRatio="none"><path d="M17.8 0 L24.6 3 V22 L17.8 25 L7.3 15 L2.6 18.9 L0 17.6 V7.4 L2.6 6.1 L7.3 10 Z M17.8 7.5 L11.7 12.5 L17.8 17.5 Z M3 9.8 V15.2 L5.7 12.5 Z" fill="#9a3db8" fill-rule="evenodd"/></svg>
<svg style="left:896px;top:736px;" width="24" height="25" viewBox="0 0 24 25" preserveAspectRatio="none"><rect x="0.5" y="0.5" width="23" height="23.5" fill="#3a3a3c"/><rect x="2" y="2" width="6.4" height="7" fill="#f4f4f4"/><rect x="2" y="7" width="6.4" height="8" fill="#e23c2a"/><rect x="2" y="15" width="6.4" height="8" fill="#b9b9b9"/><rect x="10.4" y="2" width="12" height="12.6" fill="#f5c02e"/><rect x="10.4" y="15.6" width="12" height="7.4" fill="#5a9fe8"/><rect x="4.6" y="9" width="1.6" height="14" fill="#1a1a1a"/></svg>
<div class="a" style="left:446px;top:766px;width:41px;height:2px;background:#86b7e4;"></div>
<div class="a" style="left:642px;top:766px;width:41px;height:2px;background:#86b7e4;"></div>
<div class="a" style="left:691px;top:766px;width:41px;height:2px;background:#86b7e4;"></div>
<div class="a" style="left:740px;top:766px;width:41px;height:2px;background:#86b7e4;"></div>
<div class="a" style="left:789px;top:766px;width:41px;height:2px;background:#86b7e4;"></div>
<div class="a" style="left:835px;top:766px;width:48px;height:2px;background:#86b7e4;"></div>
<div class="a" style="left:887px;top:766px;width:41px;height:2px;background:#86b7e4;"></div>
<svg style="left:1074px;top:732px;top:740px;" width="16" height="16" viewBox="0 0 16 16" preserveAspectRatio="none"><circle cx="10.6" cy="4.4" r="2.8" fill="none" stroke="#fff" stroke-width="1.2"/><path d="M6 13 Q6 8.4 10.6 8.4 Q15 8.4 15.2 12" fill="none" stroke="#fff" stroke-width="1.2"/><circle cx="4.6" cy="9" r="2.4" fill="none" stroke="#fff" stroke-width="1.2"/><path d="M0.8 16 Q0.8 12.4 4.6 12.4 Q8.2 12.4 8.4 16" fill="none" stroke="#fff" stroke-width="1.2"/></svg>
<svg style="left:1111px;top:744px;" width="12" height="7" viewBox="0 0 12 7" preserveAspectRatio="none"><path d="M0.6 6.4 L6 1 L11.4 6.4" fill="none" stroke="#fff" stroke-width="1.3"/></svg>
<svg style="left:1133px;top:740px;" width="17" height="15" viewBox="0 0 17 15" preserveAspectRatio="none"><path d="M0.6 5 H3.4 L7 1.6 V13.4 L3.4 10 H0.6 Z" fill="none" stroke="#fff" stroke-width="1.1"/><path d="M9.4 5 Q11 7.5 9.4 10" fill="none" stroke="#fff" stroke-width="1"/><path d="M11.6 3.4 Q14 7.5 11.6 11.6" fill="none" stroke="#aaa" stroke-width="1"/><path d="M13.8 1.8 Q17 7.5 13.8 13.2" fill="none" stroke="#666" stroke-width="1"/></svg>
<svg style="left:1157px;top:741px;" width="17" height="15" viewBox="0 0 17 15" preserveAspectRatio="none"><rect x="3.6" y="0.6" width="12.8" height="9" fill="none" stroke="#fff" stroke-width="1.1"/><path d="M10 9.6 V13 M6.6 13.4 H13.4" stroke="#fff" stroke-width="1.1"/><rect x="0.6" y="2.6" width="4.4" height="5" fill="#08080c" stroke="#fff" stroke-width="1"/><path d="M2.8 7.6 V10" stroke="#fff" stroke-width="1"/></svg>
<svg style="left:1181px;top:741px;" width="17" height="11" viewBox="0 0 17 11" preserveAspectRatio="none"><path d="M4 10.4 Q0.6 10.4 0.8 7.6 Q1 5.4 3.4 5.2 Q4 2 7 2 Q9 2 10 3.6 Q12.6 2.6 13.6 5.6 Q16.4 5.8 16.4 8.2 Q16.4 10.4 14 10.4 Z" fill="#fff"/><path d="M3 10.6 Q5 6.4 9.4 7.4" fill="none" stroke="#08080c" stroke-width="0.8"/></svg>
<div class="t" style="left:1208px;top:731.5px;color:#fff;font-size:12px;transform:scaleX(0.8456);transform-origin:0 0;">POR</div>
<div class="t" style="left:1209px;top:749.5px;color:#fff;font-size:12px;transform:scaleX(0.8568);transform-origin:0 0;">PTB</div>
<div class="t" style="left:1259px;top:731.5px;color:#fff;font-size:12px;transform:scaleX(0.8658);transform-origin:0 0;">19:55</div>
<div class="t" style="left:1243px;top:749.5px;color:#fff;font-size:12px;transform:scaleX(0.9657);transform-origin:0 0;">26/03/2018</div>
<svg style="left:1319px;top:740px;" width="16" height="16" viewBox="0 0 16 16" preserveAspectRatio="none"><path d="M0.6 0.6 H15.4 V12.4 H10.4 L8 15 L5.6 12.4 H0.6 Z" fill="none" stroke="#fff" stroke-width="1.2"/></svg>
<div class="a" style="left:1355px;top:728px;width:1px;height:40px;background:#3a3a3c;"></div>
<div class="a" style="left:384.5px;top:320px;width:450px;height:397.5px;background:#252527;border:1px solid #2f2f32;border-radius:4px;box-shadow:0 0 0 1px #1a1a1b"></div>
<div class="a" style="left:391px;top:344px;width:438px;height:1px;background:#2e2e31;"></div>
<div class="a" style="left:391px;top:433px;width:438px;height:1px;background:#2e2e31;"></div>
<div class="a" style="left:391px;top:556px;width:438px;height:1px;background:#2e2e31;"></div>
<div class="a" style="left:391px;top:611px;width:438px;height:1px;background:#2e2e31;"></div>
<svg style="left:393px;top:324px;" width="16" height="16" viewBox="0 0 17 16" preserveAspectRatio="none"><path d="M8.5 0.8 Q9.4 0.8 9.9 1.7 L16.3 13.2 Q16.9 14.4 16.2 15 Q15.8 15.4 15 15.4 H2 Q1.2 15.4 0.8 15 Q0.1 14.4 0.7 13.2 L7.1 1.7 Q7.6 0.8 8.5 0.8 Z" fill="#ffd646" stroke="#e0b020" stroke-width="0.8"/><path d="M7.4 4.6 H9.6 L9.2 10.4 H7.8 Z" fill="#1a1a1a"/><rect x="7.5" y="11.4" width="2" height="2" fill="#1a1a1a"/></svg>
<div class="t" style="left:416px;top:325.1px;color:#f1f1f1;font-size:12px;font-weight:bold;transform:scaleX(0.9508);transform-origin:0 0;">InvalidCastException was unhandled</div>
<svg style="left:820px;top:328.7px;" width="8" height="8" viewBox="0 0 8 8" preserveAspectRatio="none"><path d="M0.5 0.5 L7.5 7.5 M7.5 0.5 L0.5 7.5" stroke="#f1f1f1" stroke-width="1.7"/></svg>
<div class="t" style="left:396px;top:351.1px;color:#f1f1f1;font-size:12px;transform:scaleX(0.9920);transform-origin:0 0;">An unhandled exception of type 'System.InvalidCastException' occurred in</div>
<div class="t" style="left:396px;top:366.1px;color:#f1f1f1;font-size:12px;transform:scaleX(1.0331);transform-origin:0 0;">mscorlib.dll</div>
<div class="t" style="left:396px;top:396.1px;color:#f1f1f1;font-size:12px;transform:scaleX(1.0137);transform-origin:0 0;">Additional information: Não é possível converter um objeto do tipo</div>
<div class="t" style="left:396px;top:411.1px;color:#f1f1f1;font-size:12px;transform:scaleX(0.9853);transform-origin:0 0;">'System.Windows.Forms.TextBox' no tipo 'System.IConvertible'.</div>
<div class="t" style="left:396px;top:440.1px;color:#f1f1f1;font-size:12px;font-weight:bold;transform:scaleX(0.9457);transform-origin:0 0;">Troubleshooting tips:</div>
<div class="a" style="left:392px;top:459px;width:436px;height:67.6px;background:#ffffff;border:1px solid #9a9da3"></div>
<div class="a" style="left:810px;top:460px;width:17px;height:65px;background:#f0f0f0;"></div>
<div class="a" style="left:810px;top:476px;width:17px;height:38px;background:#cdcdcd;"></div>
<svg style="left:814px;top:465px;" width="9" height="6" viewBox="0 0 9 6" preserveAspectRatio="none"><path d="M0.8 5.2 L4.5 1.4 L8.2 5.2" fill="none" stroke="#404040" stroke-width="1.6"/></svg>
<svg style="left:814px;top:514px;" width="9" height="6" viewBox="0 0 9 6" preserveAspectRatio="none"><path d="M0.8 0.8 L4.5 4.6 L8.2 0.8" fill="none" stroke="#404040" stroke-width="1.6"/></svg>
<div class="t" style="left:397px;top:460.1px;color:#2f93d6;font-size:12px;transform:scaleX(0.9916);transform-origin:0 0;-webkit-text-stroke:0;">Make sure the source type is convertible to the destination type.</div>
<div class="a" style="left:393px;top:460px;width:343px;height:14.5px;border:1px dotted #222"></div>
<div class="t" style="left:397px;top:482.1px;color:#2f93d6;font-size:12px;transform:scaleX(1.0025);transform-origin:0 0;-webkit-text-stroke:0;">When casting from a number, the value must be a number less than infinity.</div>
<div class="t" style="left:397px;top:504.1px;color:#2f93d6;font-size:12px;transform:scaleX(0.9832);transform-origin:0 0;-webkit-text-stroke:0;">Get general help for this exception.</div>
<div class="t" style="left:396px;top:532.1px;color:#2486cf;font-size:12px;transform:scaleX(0.9748);transform-origin:0 0;">Search for more Help Online...</div>
<div class="t" style="left:396px;top:564.1px;color:#f1f1f1;font-size:12px;font-weight:bold;transform:scaleX(0.9486);transform-origin:0 0;">Exception settings:</div>
<div class="a" style="left:401px;top:588px;width:12px;height:12px;background:#ffffff;border:1px solid #d0d0d0"></div>
<div class="t" style="left:420px;top:587.1px;color:#f1f1f1;font-size:12px;transform:scaleX(0.9887);transform-origin:0 0;">Break when this exception type is thrown</div>
<div class="t" style="left:396px;top:618.1px;color:#f1f1f1;font-size:12px;font-weight:bold;transform:scaleX(0.9167);transform-origin:0 0;">Actions:</div>
<div class="t" style="left:396px;top:640.1px;color:#2486cf;font-size:12px;transform:scaleX(0.9597);transform-origin:0 0;">View Detail...</div>
<div class="t" style="left:396px;top:665.1px;color:#2486cf;font-size:12px;transform:scaleX(1.0043);transform-origin:0 0;">Copy exception detail to the clipboard</div>
<div class="t" style="left:396px;top:690.1px;color:#2486cf;font-size:12px;transform:scaleX(0.9864);transform-origin:0 0;">Open exception settings</div>
</body></html>
